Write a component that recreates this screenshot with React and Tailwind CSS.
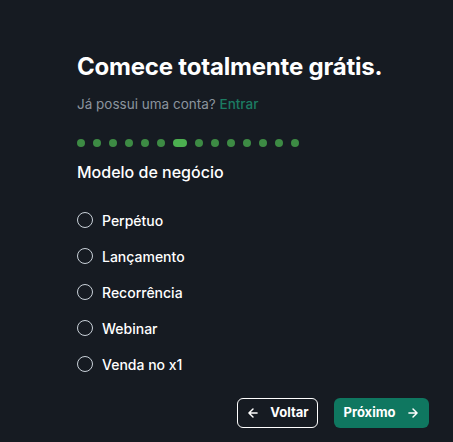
import { useState } from "react";

const options = ["Perpétuo", "Lançamento", "Recorrência", "Webinar", "Venda no x1"];

const App = () => {
  const [selected, setSelected] = useState(null);
  const steps = Array.from({ length: 14 });

  return (
    <div className="min-h-screen w-full bg-[#161b22] text-white" style={{ fontFamily: "Inter, 'Noto Sans', sans-serif" }}>
      <div className="pl-[77px] pr-6 pt-[51px]">
        <h1 className="text-[24px] font-bold leading-[32px] tracking-[-0.2px]">Comece totalmente grátis.</h1>
        <p className="mt-[11px] text-[13.5px] leading-5 text-[#8b949e]">
          Já possui uma conta? <a href="#" className="text-[#1c7c62] font-medium">Entrar</a>
        </p>

        {/* Steps */}
        <div className="mt-[25px] flex items-center gap-2">
          {steps.map((_, i) =>
            i === 6 ? (
              <span key={i} className="h-2 w-[14px] rounded-full bg-[#4caf50]" />
            ) : (
              <span key={i} className="h-2 w-2 rounded-full bg-[#3d8b44]" />
            )
          )}
        </div>

        <h2 className="mt-[13px] text-[16px] font-medium leading-6">Modelo de negócio</h2>

        <div className="mt-[26px] flex flex-col gap-[16px]">
          {options.map((o) => (
            <label key={o} className="flex h-5 cursor-pointer items-center gap-[9px]" onClick={() => setSelected(o)}>
              <span className="flex h-4 w-4 items-center justify-center rounded-full border-[1.5px] border-[#c9d1d9]">
                {selected === o && <span className="h-2 w-2 rounded-full bg-white" />}
              </span>
              <span className="text-[14px] font-medium">{o}</span>
            </label>
          ))}
        </div>
      </div>

      <div className="mt-[24px] flex justify-end gap-4 pr-6">
        <button className="flex h-[30px] w-[81px] items-center justify-center gap-[10px] rounded-md border border-white text-[13px] font-bold">
          <svg width="14" height="14" viewBox="0 0 24 24" fill="none" stroke="currentColor" strokeWidth="2.5" strokeLinecap="round" strokeLinejoin="round">
            <path d="M19 12H5M12 19l-7-7 7-7" />
          </svg>
          Voltar
        </button>
        <button className="flex h-[30px] w-[95px] items-center justify-center gap-[10px] rounded-md bg-[#0f7760] text-[13px] font-bold">
          Próximo
          <svg width="14" height="14" viewBox="0 0 24 24" fill="none" stroke="currentColor" strokeWidth="2.5" strokeLinecap="round" strokeLinejoin="round">
            <path d="M5 12h14M12 5l7 7-7 7" />
          </svg>
        </button>
      </div>
    </div>
  );
};

export default App;
